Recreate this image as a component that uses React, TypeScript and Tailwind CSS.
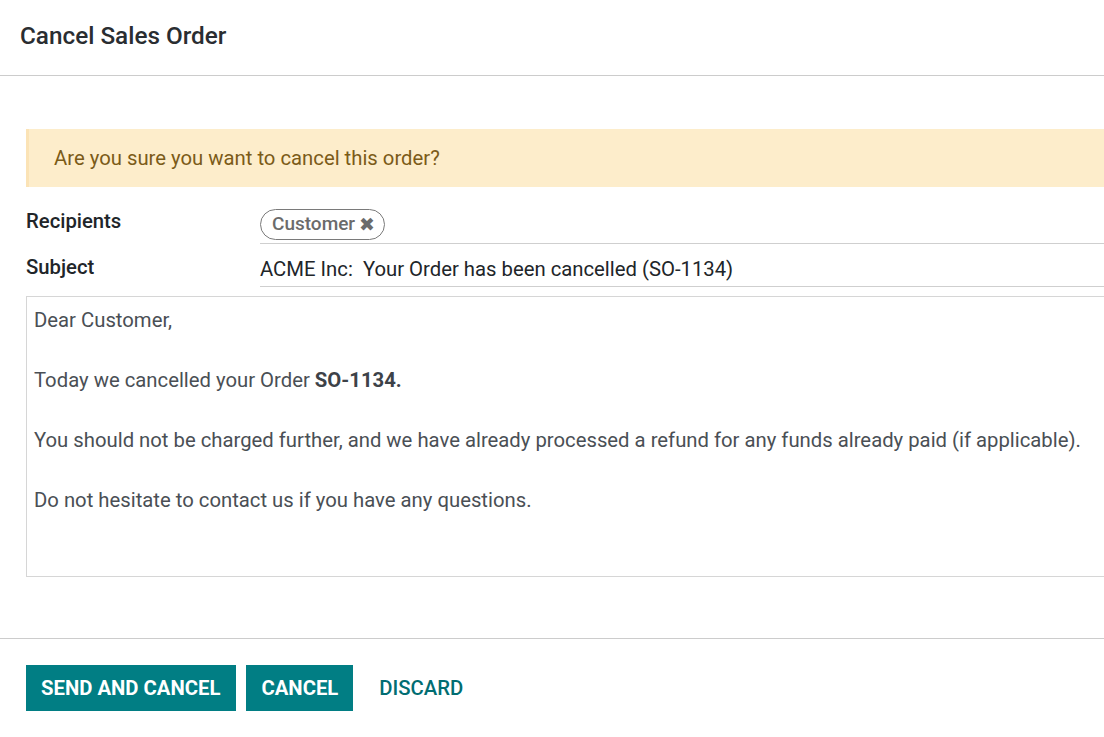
import React from "react";

const font = { fontFamily: "Roboto, 'Noto Sans', sans-serif" };

const App = () => {
  return (
    <div className="w-[1104px] h-[737px] overflow-hidden bg-white text-[#212529]" style={font}>
      <div className="w-[1160px]">
        {/* Header */}
        <div className="h-[76px] flex items-center pl-5 border-b border-[#cccccc]">
          <h1 className="text-[24.3px] font-medium text-[#2a2d31] leading-none -mt-[2px]">Cancel Sales Order</h1>
        </div>

        <main className="pl-[26px] pt-[53px]">
          <div className="h-[58px] flex items-center bg-[#fdedcb] border-l-[3px] border-[#fbe3b6] pl-[25px] text-[20.3px] text-[#7b5b18]">
            Are you sure you want to cancel this order?
          </div>

          <div className="flex items-start mt-[22px]">
            <div className="w-[234px] text-[20.3px] leading-[24px] font-medium text-[#212529]">Recipients</div>
            <div className="flex-1 border-b border-[#cfcfcf] pb-[3px]">
              <span className="inline-flex items-center h-[31px] pl-[11px] pr-[9px] rounded-full border-[1.5px] border-[#7a7a7a] text-[19px] font-medium text-[#6b6b6b] gap-[4px]">
                Customer
                <span className="text-[19px] leading-none">✖</span>
              </span>
            </div>
          </div>

          <div className="flex items-start mt-[13px]">
            <div className="w-[234px] text-[20.3px] leading-[20px] font-medium text-[#212529]">Subject</div>
            <div className="flex-1 border-b border-[#cfcfcf] pb-[5px] text-[20.3px] leading-[24px] text-[#212529] whitespace-pre">
              {"ACME Inc:  Your Order has been cancelled (SO-1134)"}
            </div>
          </div>

          <div className="mt-[9px] h-[281px] border border-[#d6d6d6] pl-[7px] pt-[8px] text-[20.3px] leading-[30px] text-[#4a4f55]">
            <p>Dear Customer,</p>
            <p className="mt-[30px]">
              Today we cancelled your Order <b className="font-bold text-[#3d4248]">SO-1134.</b>
            </p>
            <p className="mt-[30px]">
              You should not be charged further, and we have already processed a refund for any funds already paid (if applicable).
            </p>
            <p className="mt-[30px]">Do not hesitate to contact us if you have any questions.</p>
          </div>
        </main>

        {/* Footer */}
        <div className="mt-[61px] border-t border-[#cccccc] pl-[26px] pt-[26px] flex items-center gap-[10px]">
          <button className="h-[46px] pl-[15px] pr-[16px] bg-[#017e84] text-white text-[20.3px] font-bold uppercase">Send and Cancel</button>
          <button className="h-[46px] px-[15px] bg-[#017e84] text-white text-[20.3px] font-bold uppercase">Cancel</button>
          <button className="h-[46px] px-[16px] text-[#016d72] text-[20.3px] font-medium uppercase">Discard</button>
        </div>
      </div>
    </div>
  );
};

export default App;
